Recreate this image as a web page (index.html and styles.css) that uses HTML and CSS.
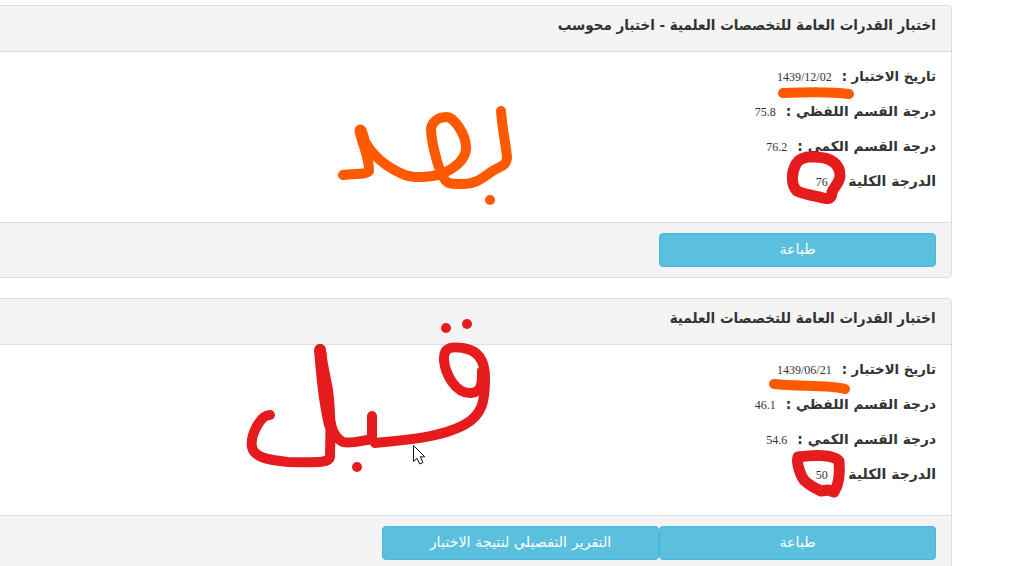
FILE: index.html
```html
<!DOCTYPE html>
<html lang="ar" dir="rtl">
<head>
<meta charset="utf-8">
<title>نتائج الاختبار</title>
<link rel="stylesheet" href="styles.css">
</head>
<body>
<main class="results">
  <section class="panel">
    <h2 class="panel-heading"><span class="title">اختبار القدرات العامة للتخصصات العلمية - اختبار محوسب</span></h2>
    <dl class="panel-body">
      <div class="row date"><dt>تاريخ الاختبار :</dt><dd>1439/12/02</dd></div>
      <div class="row section"><dt>درجة القسم اللفظي :</dt><dd>75.8</dd></div>
      <div class="row section"><dt>درجة القسم الكمي :</dt><dd>76.2</dd></div>
      <div class="row"><dt>الدرجة الكلية :</dt><dd>76</dd></div>
    </dl>
    <footer class="panel-footer"><button class="btn">طباعة</button></footer>
  </section>
  <section class="panel">
    <h2 class="panel-heading"><span class="title">اختبار القدرات العامة للتخصصات العلمية</span></h2>
    <dl class="panel-body">
      <div class="row date"><dt>تاريخ الاختبار :</dt><dd>1439/06/21</dd></div>
      <div class="row section"><dt>درجة القسم اللفظي :</dt><dd>46.1</dd></div>
      <div class="row section"><dt>درجة القسم الكمي :</dt><dd>54.6</dd></div>
      <div class="row"><dt>الدرجة الكلية :</dt><dd>50</dd></div>
    </dl>
    <footer class="panel-footer"><button class="btn">طباعة</button><button class="btn">التقرير التفصيلي لنتيجة الاختبار</button></footer>
  </section>
</main>
<svg class="ink" width="1009" height="566" viewBox="0 0 1009 566" aria-hidden="true">
  <g class="orange">
    <path d="M783 93C805 92 835 92 849 94"/>
    <path d="M774 384C796 387 830 384 845 389"/>
    <path d="M501 111C502 128 507 151 507 158C506 167 499 166 491 172C479 181 473 184 463 184C447 184 446 184 441 173C436 160 431 140 431 128C433 120 440 117 447 117C453 117 466 133 466 148C466 160 454 168 444 173C430 178 413 178 405 175C387 168 371 155 363 138M360 130C360 141 369 153 369 171C366 175 354 173 343 175"/>
    <path class="thick" d="M360.500 130.500L363 138"/>
    <circle cx="490" cy="200" r="5"/>
  </g>
  <g class="red">
    <path class="ring" d="M816 157C804 156 799 159 796 164C791 173 791 185 797 191C806 195 816 196 823 198C831 200 832 196 832 192C834 187 840 182 840 176C840 164 832 157 814 157"/>
    <path class="ring" d="M798 457C796 463 801 478 806 482C812 487 817 489 821 491L828 490L834 492C840 483 840 472 839 461C833 454 812 455 798 457"/>
    <path d="M482 371C482 381 483 392 471 393C455 394 445 373 444 360C443 345 455 347 463 348C476 350 485 358 485 378C485 400 483 415 464 425C439 438 404 440 375 443M372 416L372 439C360 441 351 444 343 442C333 437 331 428 327 404C322 378 324 356 320 349L328 390C332 420 330 440 330 457C329 464 311 462 288 462C267 460 254 457 252 447C250 436 260 415 270 415"/>
    <path class="thick" d="M320 350C322 371 323 395 330 425"/>
    <circle cx="446" cy="328" r="5"/><circle cx="467" cy="324" r="5"/><circle cx="357" cy="467" r="5"/>
  </g>
  <path class="cursor" d="M413.5 445.500V461.5L417 458.3L419.8 464L423 462.5L420.3 456.8H424.8Z"/>
</svg>
</body>
</html>
```
FILE: styles.css
```css
* { box-sizing: border-box; }
body { margin: 0; height: 566px; overflow: hidden; position: relative; background: #fff; color: #333; font: bold 14px/20px "DejaVu Sans", sans-serif; }
.results { width: 975px; margin: 5px 57px 0 0; display: flex; flex-direction: column; gap: 20px; }
.panel { border: 1px solid #ddd; border-radius: 4px; background: #fff; overflow: hidden; }
.panel-heading { margin: 0; height: 46px; padding: 9px 15px; border-bottom: 1px solid #ddd; background: #f4f4f4; font: inherit; }
.title { display: inline-block; transform: scale(0.965, 1.06); transform-origin: right center; white-space: nowrap; }
.panel-body { margin: 0; height: 170px; padding: 14px 15px; }
.row { display: flex; gap: 10px; height: 35px; line-height: 20px; white-space: nowrap; }
.date dt { font-size: 13.3px; line-height: 22px; }
.section dt { font-size: 13.75px; }
dd { margin: 0; font: 12px/22px "Liberation Serif", serif; }
.panel-footer { height: 55px; padding: 10px 15px; border-top: 1px solid #ddd; background: #f4f4f4; display: flex; }
.btn { width: 277px; height: 34px; padding: 0 0 2px; border: 1px solid #46b8da; border-radius: 4px; background: #5bc0de; color: #fff; font: 14.3px/30px "DejaVu Sans", sans-serif; }
.ink { position: absolute; left: 0; top: 0; }
.orange path, .red path { fill: none; stroke-width: 10; stroke-linecap: round; stroke-linejoin: round; }
.orange path { stroke: #ff5900; }
.orange circle { fill: #ff5900; }
.red path { stroke: #e61b1d; }
.red circle { fill: #e61b1d; }
.red .ring { stroke-width: 11; }
.orange .thick, .red .thick { stroke-width: 12; }
.cursor { fill: #fff; stroke: #111; }
```
